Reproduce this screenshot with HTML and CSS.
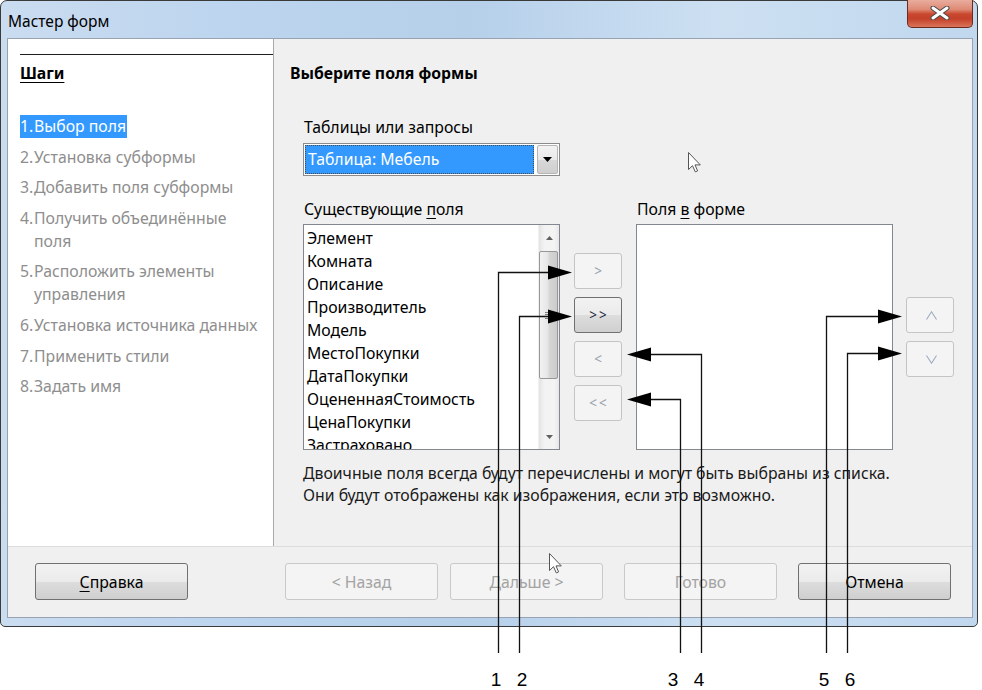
FILE: index.html
```html
<!DOCTYPE html>
<html lang="ru">
<head>
<meta charset="utf-8">
<title>Мастер форм</title>
<link rel="stylesheet" href="styles.css">
</head>
<body>
<div class="window">
  <div class="titlebar">
    <span class="title">Мастер форм</span>
    <div class="close">
      <svg width="20" height="14" viewBox="0 0 20 14">
        <path d="M3 2 L17 12 M17 2 L3 12" stroke="#4a4a4a" stroke-width="5" stroke-linecap="round"/>
        <path d="M3 2 L17 12 M17 2 L3 12" stroke="#ffffff" stroke-width="3" stroke-linecap="round"/>
      </svg>
    </div>
  </div>
  <div class="client">
    <div class="main">
      <aside class="steps">
        <div class="steps-rule"></div>
        <div class="steps-title">Шаги</div>
        <ol class="step-list">
          <li class="step active"><span class="num">1.</span><span class="txt">Выбор поля</span></li>
          <li class="step"><span class="num">2.</span><span class="txt">Установка субформы</span></li>
          <li class="step"><span class="num">3.</span><span class="txt">Добавить поля субформы</span></li>
          <li class="step"><span class="num">4.</span><span class="txt">Получить объединённые поля</span></li>
          <li class="step"><span class="num">5.</span><span class="txt">Расположить элементы управления</span></li>
          <li class="step"><span class="num">6.</span><span class="txt">Установка источника данных</span></li>
          <li class="step"><span class="num">7.</span><span class="txt">Применить стили</span></li>
          <li class="step"><span class="num">8.</span><span class="txt">Задать имя</span></li>
        </ol>
      </aside>
      <section class="content">
        <h1 class="heading">Выберите поля формы</h1>
        <div class="form">
          <div class="label">Таблицы или запросы</div>
          <div class="combo">
            <div class="combo-value">Таблица: Мебель</div>
            <div class="combo-btn">
              <svg width="9" height="5" viewBox="0 0 9 5"><path d="M0 0 H9 L4.5 5 Z" fill="#000"/></svg>
            </div>
          </div>
          <div class="fields">
            <div class="col">
              <div class="label label-list">Существующие <u>п</u>оля</div>
              <div class="listbox">
                <ul class="items">
                  <li>Элемент</li>
                  <li>Комната</li>
                  <li>Описание</li>
                  <li>Производитель</li>
                  <li>Модель</li>
                  <li>МестоПокупки</li>
                  <li>ДатаПокупки</li>
                  <li>ОцененнаяСтоимость</li>
                  <li>ЦенаПокупки</li>
                  <li>Застраховано</li>
                </ul>
                <div class="scrollbar">
                  <div class="sb-arrow">
                    <svg width="7" height="4" viewBox="0 0 7 4"><path d="M0 4 L3.5 0 L7 4 Z" fill="#606060"/></svg>
                  </div>
                  <div class="sb-thumb">
                    <svg width="7" height="7" viewBox="0 0 7 7"><path d="M0 .5 H7 M0 2.5 H7 M0 4.5 H7 M0 6.5 H7" stroke="#7a7a7a" stroke-width="1"/></svg>
                  </div>
                  <div class="sb-fill"></div>
                  <div class="sb-arrow">
                    <svg width="7" height="4" viewBox="0 0 7 4"><path d="M0 0 L3.5 4 L7 0 Z" fill="#606060"/></svg>
                  </div>
                </div>
              </div>
            </div>
            <div class="move-btns">
              <div class="sbtn disabled">&gt;</div>
              <div class="sbtn enabled">&gt;&gt;</div>
              <div class="sbtn disabled">&lt;</div>
              <div class="sbtn disabled">&lt;&lt;</div>
            </div>
            <div class="col col-right">
              <div class="label label-list">Поля <u>в</u> форме</div>
              <div class="listbox"></div>
            </div>
            <div class="order-btns">
              <div class="sbtn disabled">
                <svg width="11" height="9" viewBox="0 0 11 9"><path d="M0.5 8.5 L5.5 0.8 L10.5 8.5" fill="none" stroke="#9eabbf" stroke-width="1.1"/></svg>
              </div>
              <div class="sbtn disabled">
                <svg width="11" height="9" viewBox="0 0 11 9"><path d="M0.5 0.5 L5.5 8.2 L10.5 0.5" fill="none" stroke="#9eabbf" stroke-width="1.1"/></svg>
              </div>
            </div>
          </div>
          <p class="note">Двоичные поля всегда будут перечислены и могут быть выбраны из списка.<br>Они будут отображены как изображения, если это возможно.</p>
        </div>
      </section>
    </div>
    <div class="footer">
      <div class="btn enabled btn-help"><span><u>С</u>правка</span></div>
      <div class="btn disabled btn-back">&lt; Назад</div>
      <div class="btn disabled btn-next">Дальше &gt;</div>
      <div class="btn disabled btn-done">Готово</div>
      <div class="btn enabled btn-cancel">Отмена</div>
    </div>
  </div>
</div>

<svg class="annot" width="982" height="690" viewBox="0 0 982 690">
  <g stroke="#111" stroke-width="1.3" fill="none">
    <path d="M498.5 653 V272.5 H552"/>
    <path d="M519.5 653 V316.5 H552"/>
    <path d="M680.5 653 V399.5 H648"/>
    <path d="M701.5 653 V354.5 H648"/>
    <path d="M826.5 653 V316.5 H880"/>
    <path d="M847.5 653 V353.5 H880"/>
  </g>
  <g fill="#000">
    <polygon points="572,272.5 548,265.5 548,279.5"/>
    <polygon points="572,316.5 548,309.5 548,323.5"/>
    <polygon points="627,399.5 651,392.5 651,406.5"/>
    <polygon points="627,354.5 651,347.5 651,361.5"/>
    <polygon points="902,316.5 878,309.5 878,323.5"/>
    <polygon points="902,353.5 878,346.5 878,360.5"/>
  </g>
  <g class="cursor" transform="translate(688.5 152.5)">
    <path d="M0 0 V17 L4 13.2 L6.8 19.4 L9.1 18.4 L6.5 12.4 L11.8 12.4 Z" fill="#fff" stroke="#555" stroke-width="1"/>
  </g>
  <g class="cursor" transform="translate(549.5 553.5)">
    <path d="M0 0 V17 L4 13.2 L6.8 19.4 L9.1 18.4 L6.5 12.4 L11.8 12.4 Z" fill="#fff" stroke="#555" stroke-width="1"/>
  </g>
  <g class="nums" font-family="Liberation Sans, Arial, sans-serif" font-size="19" fill="#000" text-anchor="middle">
    <text x="496" y="686">1</text>
    <text x="522" y="686">2</text>
    <text x="673" y="686">3</text>
    <text x="699" y="686">4</text>
    <text x="824" y="686">5</text>
    <text x="850" y="686">6</text>
  </g>
</svg>
</body>
</html>
```

FILE: styles.css
```css
* {
  box-sizing: border-box;
}

html,
body {
  margin: 0;
  padding: 0;
  background: #ffffff;
}

body {
  width: 982px;
  height: 690px;
  position: relative;
  overflow: hidden;
  font-family: "Noto Sans", "Open Sans", sans-serif;
  font-size: 15.8px;
  color: #000;
}

/* ---------- window chrome ---------- */
.window {
  width: 978px;
  height: 627px;
  border: 1px solid #3a3a3a;
  border-radius: 7px 7px 5px 5px;
  background: linear-gradient(90deg, #cadcf0 0%, #bdd5ee 22%, #b6d0ea 48%, #cde0f2 74%, #c0d7ee 100%);
  padding: 0 4px 8px 6px;
  display: flex;
  flex-direction: column;
}

.titlebar {
  height: 37px;
  display: flex;
  align-items: flex-start;
}

.title {
  padding: 10px 0 0 1px;
  line-height: 20px;
  font-size: 15.5px;
  color: #000;
}

.close {
  margin-left: auto;
  margin-top: -1px;
  width: 66px;
  height: 28px;
  border: 1px solid #6e2a1e;
  border-top: none;
  border-radius: 0 0 5px 5px;
  background: linear-gradient(180deg, #e9ad9e 0%, #de8a74 35%, #c9472e 52%, #c4412a 70%, #d9755b 100%);
  display: flex;
  align-items: center;
  justify-content: center;
  padding-bottom: 2px;
}

.client {
  flex: 1;
  border: 1px solid #97a3b2;
  background: #f0f0f0;
  display: flex;
  flex-direction: column;
}

.main {
  height: 507px;
  display: flex;
}

/* ---------- steps panel ---------- */
.steps {
  width: 266px;
  background: #ffffff;
  border-right: 1px solid #a9a9a9;
  padding-left: 12px;
}

.steps-rule {
  margin-top: 15px;
  height: 1px;
  background: #1e1e1e;
}

.steps-title {
  margin-top: 7px;
  line-height: 23px;
  font-weight: bold;
  text-decoration: underline;
  text-underline-offset: 3px;
}

.step-list {
  list-style: none;
  margin: 30px 0 0 0;
  padding: 0;
  display: flex;
  flex-direction: column;
  gap: 7.6px;
}

.step {
  display: flex;
  line-height: 23px;
  color: #8e8e8e;
}

.step .num {
  flex: 0 0 14px;
}

.step .txt {
  flex: 1;
  padding-right: 14px;
}

.step.active {
  align-self: flex-start;
  background: #3399ff;
  color: #ffffff;
}

.step.active .txt {
  flex: none;
  padding-right: 1px;
}

/* ---------- content ---------- */
.content {
  flex: 1;
  padding: 23px 0 0 16px;
}

.heading {
  margin: 0;
  font-size: 15.8px;
  font-weight: bold;
  line-height: 23px;
}

.form {
  margin-left: 13px;
}

.label {
  margin-top: 31px;
  padding-left: 1px;
  line-height: 23px;
}

.label u {
  text-underline-offset: 3px;
}

.label-list {
  margin-top: 0;
  margin-bottom: 3px;
}

.combo {
  margin-top: 4px;
  width: 257px;
  height: 33px;
  border: 1px solid #8c8c8c;
  background: #ffffff;
  padding: 1px;
  display: flex;
  gap: 3px;
}

.combo-value {
  flex: 1;
  background: #3399ff;
  color: #ffffff;
  outline: 1px dotted #4a4a4a;
  outline-offset: -1px;
  line-height: 29px;
  padding-left: 3px;
}

.combo-btn {
  width: 21px;
  border: 1px solid #b5b5b5;
  border-radius: 2px;
  background: linear-gradient(180deg, #f3f3f3 0%, #e9e9e9 50%, #d8d8d8 51%, #cfcfcf 100%);
  display: flex;
  align-items: center;
  justify-content: center;
}

.fields {
  margin-top: 22px;
  display: flex;
  align-items: flex-start;
}

.col {
  width: 257px;
}

.listbox {
  width: 257px;
  height: 226px;
  border: 1px solid #828790;
  background: #ffffff;
  display: flex;
  overflow: hidden;
}

.items {
  list-style: none;
  margin: 0;
  padding: 2px 0 0 3px;
  flex: 1;
  line-height: 23px;
  white-space: nowrap;
  overflow: hidden;
}

.scrollbar {
  width: 21px;
  background: linear-gradient(90deg, #e3e3e3 0%, #f2f2f2 25%, #f4f4f4 75%, #e8e8e8 100%);
  display: flex;
  flex-direction: column;
  border-left: 1px solid #f0f0f0;
}

.sb-arrow {
  height: 25px;
  display: flex;
  align-items: center;
  justify-content: center;
}

.sb-thumb {
  height: 128px;
  margin: 1px 1px 0 0;
  border: 1px solid #979797;
  border-radius: 2px;
  background: linear-gradient(90deg, #f2f2f2 0%, #e6e6e6 45%, #d6d6d6 55%, #cbcbcb 100%);
  display: flex;
  align-items: center;
  justify-content: center;
}

.sb-fill {
  flex: 1;
}

.move-btns {
  margin-left: 14px;
  padding-top: 55px;
  display: flex;
  flex-direction: column;
  gap: 8px;
}

.col-right {
  margin-left: 14px;
}

.order-btns {
  margin-left: 13px;
  padding-top: 99px;
  display: flex;
  flex-direction: column;
  gap: 8px;
}

.sbtn {
  width: 48px;
  height: 36px;
  border-radius: 3px;
  display: flex;
  align-items: center;
  justify-content: center;
  font-size: 13.5px;
  letter-spacing: 2px;
  padding-left: 2px;
}

.sbtn.disabled {
  border: 1px solid #c4c4c4;
  background: #f4f4f4;
  color: #97a0ac;
}

.sbtn.enabled {
  border: 1px solid #707070;
  background: linear-gradient(180deg, #f2f2f2 0%, #ebebeb 50%, #dddddd 51%, #cfcfcf 100%);
  color: #1f2a3d;
}

.note {
  margin: 12px 0 0 0;
  line-height: 22px;
  color: #1a1a1a;
  white-space: nowrap;
}

/* ---------- footer ---------- */
.footer {
  flex: 1;
  border-top: 1px solid #dcdcdc;
  padding: 16px 0 0 27px;
  display: flex;
  align-items: flex-start;
}

.btn {
  width: 153px;
  height: 37px;
  border-radius: 3px;
  display: flex;
  align-items: center;
  justify-content: center;
  line-height: 20px;
}

.btn.enabled {
  border: 1px solid #707070;
  background: linear-gradient(180deg, #f2f2f2 0%, #ebebeb 50%, #dddddd 51%, #cfcfcf 100%);
  color: #000;
}

.btn.disabled {
  border: 1px solid #c9c9c9;
  background: #f4f4f4;
  color: #a3a3a3;
}

.btn u {
  text-underline-offset: 3px;
}

.btn-back {
  margin-left: 97px;
}

.btn-next {
  margin-left: 12px;
}

.btn-done {
  margin-left: 21px;
}

.btn-cancel {
  margin-left: 21px;
}

/* ---------- annotation overlay ---------- */
.annot {
  position: absolute;
  left: 0;
  top: 0;
  pointer-events: none;
}
```
